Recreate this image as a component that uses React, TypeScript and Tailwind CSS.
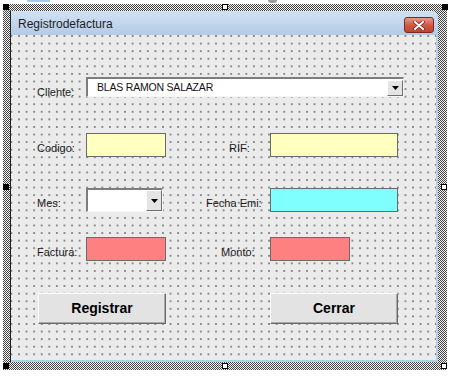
import React from "react";

function Label({ children, className = "" }: { children: React.ReactNode; className?: string }) {
  return (
    <div className={`mt-[9px] text-[11px] leading-[13px] text-[#1a1a1a] whitespace-nowrap ${className}`}>
      {children}
    </div>
  );
}

function Box({ className }: { className: string }) {
  return <div className={`h-[24px] border border-[#6a6a6a] ${className}`} />;
}

function DropButton({ className }: { className: string }) {
  return (
    <div
      className={`flex items-center justify-center bg-[#e4e4e4] border border-t-white border-l-white border-r-[#6e6e6e] border-b-[#6e6e6e] ${className}`}
    >
      <svg width="7" height="4" viewBox="0 0 7 4">
        <path d="M0 0H7L3.5 4Z" fill="#000" />
      </svg>
    </div>
  );
}

function Button({ children }: { children: React.ReactNode }) {
  return (
    <div className="w-[128px] h-[31px] flex items-center justify-center bg-[#e3e3e3] border border-t-white border-l-white border-r-[#6a6a6a] border-b-[#6a6a6a] shadow-[inset_-1px_-1px_0_#a8a8a8] text-[14px] font-bold text-black">
      {children}
    </div>
  );
}

function Handle({ className }: { className: string }) {
  return <div className={`absolute w-[6px] h-[6px] ${className}`} />;
}

export default function App() {
  return (
    <div className="relative w-[450px] h-[376px] bg-white overflow-hidden font-['Liberation_Sans',Arial,sans-serif]">
      <div className="flex h-[4px]">
        <div className="ml-[27px] w-[23px] h-[2px] bg-[#a9c8ec]" />
        <div className="ml-[218px] w-[9px] h-[3px] bg-[#9c9c9c] rounded-b-[3px]" />
      </div>
      <div className="ml-[3px] w-[444px] h-[366px] pl-[7px] pt-[7px] pr-[9px] pb-[8px] bg-[repeating-conic-gradient(#444444_0_25%,#f4f4f4_0_50%)] bg-[length:2px_2px]">
        <div className="w-full h-full flex flex-col border-l border-[#222]">
          {/* title bar */}
          <div className="h-[24px] flex items-start justify-between rounded-tr-[6px] bg-gradient-to-b from-[#d2e2f4] to-[#b3cae6]">
            <div className="pl-[7px] pt-[6px] text-[12px] leading-[14px] text-[#1e1e1e]">Registrodefactura</div>
            <div className="mt-[6px] mr-[4px] w-[30px] h-[16px] rounded-[3px] border border-[#7a2a20] bg-gradient-to-b from-[#e59a8c] via-[#cf5a45] to-[#c04530] flex items-center justify-center">
              <svg width="12" height="9" viewBox="0 0 12 9">
                <path d="M2 1L10 8M10 1L2 8" stroke="#6b2218" strokeWidth="3.4" strokeLinecap="round" />
                <path d="M2 1L10 8M10 1L2 8" stroke="#ffffff" strokeWidth="2" strokeLinecap="round" />
              </svg>
            </div>
          </div>
          {/* body */}
          <div className="flex-1 flex flex-col border-r-2 border-b-2 border-r-[#b7cde6] border-b-[#a7d3e4] bg-[#ebebeb] bg-[radial-gradient(circle,#555555_0.5px,transparent_1px)] bg-[length:7.58px_7.58px] bg-[position:4.2px_4.8px]">
            {/* Cliente */}
            <div className="mt-[42px] h-[20px] flex items-start pl-[26px]">
              <Label className="w-[49px]">Cliente:</Label>
              <div className="w-[318px] h-[20px] flex items-center justify-between bg-white border-t-2 border-l-2 border-t-[#7d7d7d] border-l-[#7d7d7d] border-b border-r border-b-[#f6f6f6] border-r-[#f6f6f6]">
                <span className="pl-[9px] text-[10.5px] tracking-[-0.2px] text-[#111]">BLAS RAMON SALAZAR</span>
                <DropButton className="w-[16px] h-[16px]" />
              </div>
            </div>
            {/* Codigo / RIF */}
            <div className="mt-[36px] h-[24px] flex items-start pl-[26px]">
              <Label className="w-[49px]">Codigo:</Label>
              <Box className="w-[80px] bg-[#ffffc0]" />
              <Label className="w-[104px] pl-[63px]">RIF:</Label>
              <Box className="w-[128px] bg-[#ffffc0]" />
            </div>
            {/* Mes / Fecha */}
            <div className="mt-[31px] h-[24px] flex items-start pl-[26px]">
              <Label className="w-[49px]">Mes:</Label>
              <div className="w-[80px]">
                <div className="w-[77px] h-[24px] flex items-center justify-end bg-white border-t-2 border-l-2 border-t-[#7d7d7d] border-l-[#7d7d7d] border-b border-r border-b-[#f6f6f6] border-r-[#f6f6f6]">
                  <DropButton className="w-[16px] h-[21px]" />
                </div>
              </div>
              <Label className="w-[104px] pl-[40px]">Fecha Emi:</Label>
              <Box className="w-[128px] bg-[#80ffff]" />
            </div>
            {/* Factura / Monto */}
            <div className="mt-[25px] h-[24px] flex items-start pl-[26px]">
              <Label className="w-[49px]">Factura:</Label>
              <Box className="w-[80px] bg-[#ff8080]" />
              <Label className="w-[104px] pl-[55px]">Monto:</Label>
              <Box className="w-[80px] bg-[#ff8080]" />
            </div>
            {/* Buttons */}
            <div className="mt-[32px] h-[31px] flex items-start pl-[27px]">
              <Button>Registrar</Button>
              <div className="w-[104px]" />
              <Button>Cerrar</Button>
            </div>
          </div>
        </div>
      </div>
      {/* selection handles */}
      <Handle className="left-[3px] top-[4px] bg-black" />
      <Handle className="left-[222px] top-[4px] bg-white border border-black" />
      <Handle className="left-[442px] top-[4px] bg-black" />
      <Handle className="left-[3px] top-[184px] bg-black" />
      <Handle className="left-[441px] top-[184px] bg-white border border-black" />
      <Handle className="left-[3px] top-[363px] bg-black" />
      <Handle className="left-[222px] top-[363px] bg-white border border-black" />
      <Handle className="left-[441px] top-[363px] bg-white border border-black" />
    </div>
  );
}
